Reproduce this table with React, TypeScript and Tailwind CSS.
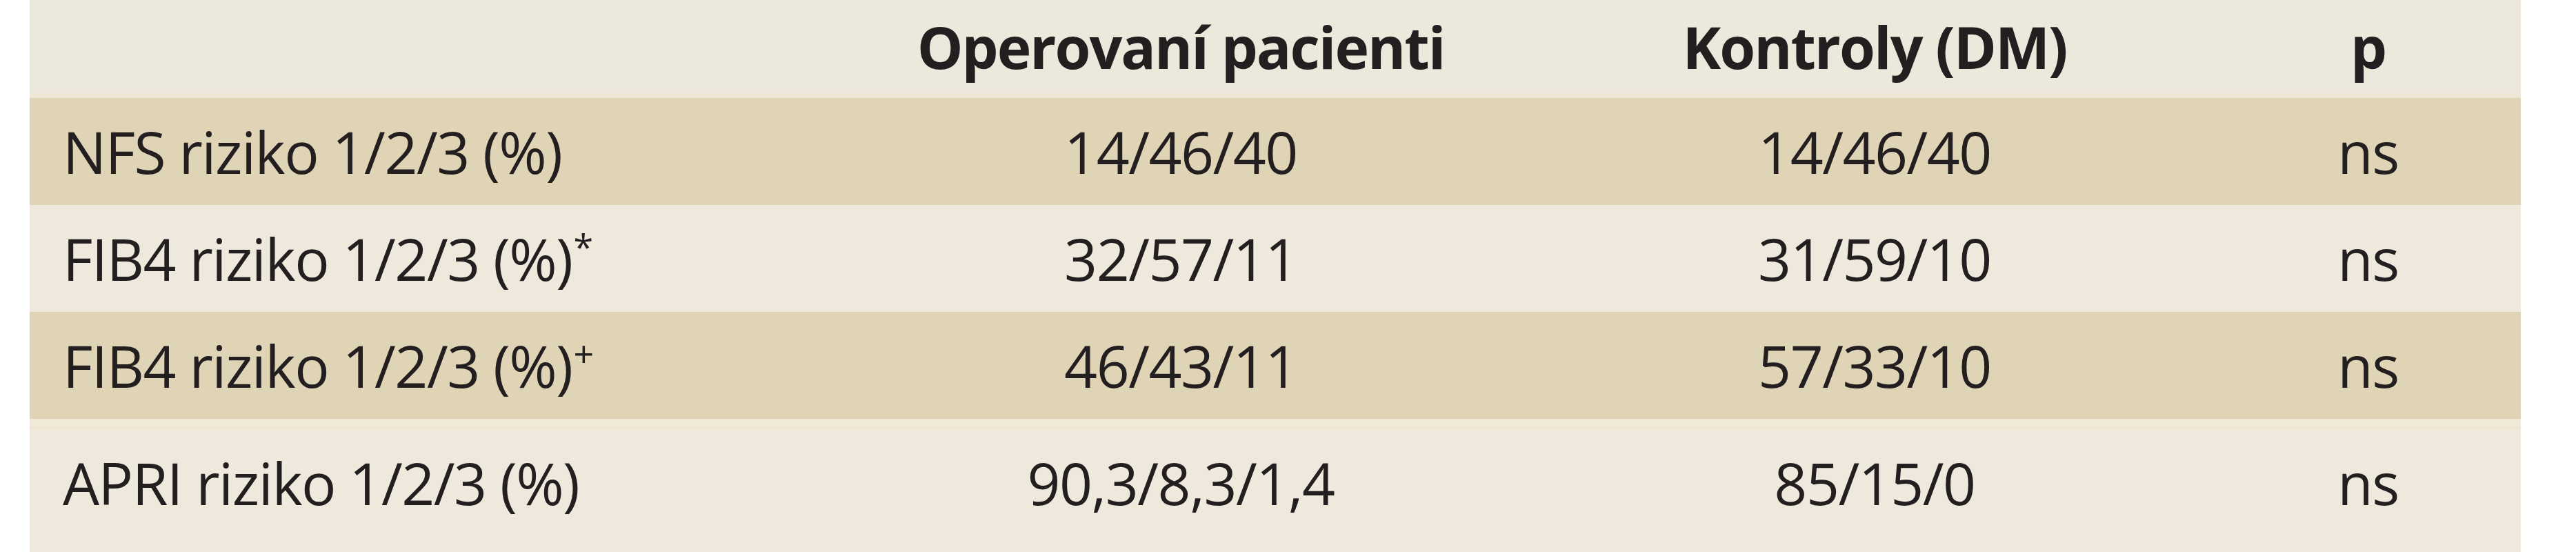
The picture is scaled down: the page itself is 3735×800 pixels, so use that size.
import React from "react";

const rows = [
  { label: "NFS riziko 1/2/3 (%)", sup: "", a: "14/46/40", b: "14/46/40", p: "ns", dark: true },
  { label: "FIB4 riziko 1/2/3 (%)", sup: "*", a: "32/57/11", b: "31/59/10", p: "ns", dark: false },
  { label: "FIB4 riziko 1/2/3 (%)", sup: "+", a: "46/43/11", b: "57/33/10", p: "ns", dark: true },
  { label: "APRI riziko 1/2/3 (%)", sup: "", a: "90,3/8,3/1,4", b: "85/15/0", p: "ns", dark: false },
];

export default function App() {
  return (
    <div className="w-[3735px] h-[800px] bg-white pl-[43px] pr-[80px]">
      <div
        className="h-[800px] bg-[#efe9dd] text-[#231f20] flex flex-col"
        style={{ fontFamily: '"Open Sans", "Noto Sans", sans-serif' }}
      >
        <div className="grid grid-cols-[1157px_1024px_988px_1fr] h-[135px] items-center bg-[#ede8dc] text-[84px] font-bold tracking-[-2px]">
          <div></div>
          <div className="text-center">Operovaní pacienti</div>
          <div className="text-center">Kontroly (DM)</div>
          <div className="text-center">p</div>
        </div>
        <div className="h-[7px] bg-[#efe7d5]"></div>
        {rows.map((r, i) => (
          <React.Fragment key={i}>
            {i === 3 && <div className="h-[15px] bg-[#f0e9d8] border-b-[3px] border-[#efe4cf]"></div>}
            <div
              className={
                "grid grid-cols-[1157px_1024px_988px_1fr] h-[155px] items-center text-[84px] tracking-[-1.5px] leading-none " +
                (r.dark ? "bg-[#dfd4b5]" : "bg-[#efe9dd]")
              }
            >
              <div className="pl-[48px] whitespace-nowrap">
                {r.label}
                {r.sup && <sup className="text-[52px] top-[-30px] ml-[2px]">{r.sup}</sup>}
              </div>
              <div className="text-center">{r.a}</div>
              <div className="text-center">{r.b}</div>
              <div className="text-center">{r.p}</div>
            </div>
          </React.Fragment>
        ))}
      </div>
    </div>
  );
}
